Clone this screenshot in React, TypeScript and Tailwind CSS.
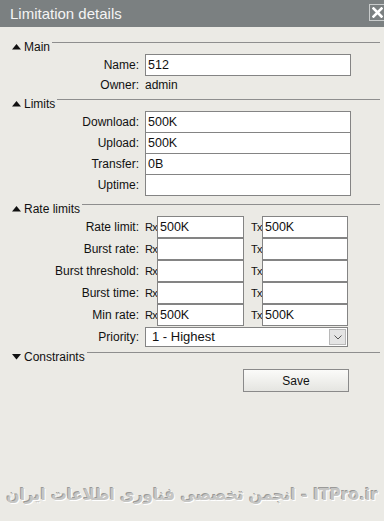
import React from "react";

function Tri({ down = false }: { down?: boolean }) {
  return (
    <svg width="9" height="6" viewBox="0 0 9 6" className="shrink-0">
      {down ? <polygon points="0,0 9,0 4.5,5.5" fill="#111" /> : <polygon points="0,5.5 9,5.5 4.5,0" fill="#111" />}
    </svg>
  );
}

function Header({ title, down = false, cls = "" }: { title: string; down?: boolean; cls?: string }) {
  return (
    <div className={"flex h-[15px] items-start pl-[12px] pr-[4px] " + cls}>
      <div className="flex items-center h-[14px] mt-[1px]">
        <Tri down={down} />
        <span className="ml-[3px] text-[12px] leading-[14px] text-[#111]">{title}</span>
      </div>
      <div className="flex-1 ml-[2px] mt-[3px] border-t border-[#8e8e8e]" />
    </div>
  );
}

function Label({ children }: { children: React.ReactNode }) {
  return <div className="w-[140px] shrink-0 text-right text-[12px] leading-[14px] text-[#111] pr-[1px]">{children}</div>;
}

function Input({ value = "", w, cls = "" }: { value?: string; w: string; cls?: string }) {
  return (
    <div className={"h-[22px] shrink-0 bg-white border border-[#848484] pl-[2px] flex items-center text-[12.5px] text-[#111] " + w + " " + cls}>
      {value}
    </div>
  );
}

function Row({ label, value, cls = "" }: { label: string; value?: string; cls?: string }) {
  return (
    <div className={"flex items-center " + cls}>
      <Label>{label}</Label>
      <Input value={value} w="w-[206px] ml-[5px]" />
    </div>
  );
}

function RateRow({ label, rx = "", tx = "" }: { label: string; rx?: string; tx?: string }) {
  return (
    <div className="flex items-center h-[22px]">
      <Label>{label}</Label>
      <span className="ml-[5px] w-[12px] whitespace-nowrap text-[11px] tracking-[-0.6px] text-[#111]">Rx</span>
      <Input value={rx} w="w-[87px]" />
      <span className="ml-[7px] w-[11px] whitespace-nowrap text-[11px] tracking-[-0.6px] text-[#111]">Tx</span>
      <Input value={tx} w="w-[86px]" />
    </div>
  );
}

export default function App() {
  return (
    <div className="w-[384px] h-[521px] bg-[#ebeae5] flex flex-col overflow-hidden font-['Liberation_Sans',Arial,sans-serif]">
      <div className="h-[27px] shrink-0 bg-[#7b8081] flex items-center justify-between pl-[10px]">
        <span className="text-[15px] text-[#f4f4f4] leading-none">Limitation details</span>
        <div className="w-[17px] h-[17px] mb-[3px] border border-[#c9cccc] flex items-center justify-center -mr-[2px]">
          <svg width="11" height="11" viewBox="0 0 11 11">
            <path d="M1.5 1.5 L9.5 9.5 M9.5 1.5 L1.5 9.5" stroke="#ffffff" strokeWidth="2.6" strokeLinecap="square" />
          </svg>
        </div>
      </div>

      <Header title="Main" cls="mt-[12px]" />
      <Row label="Name:" value="512" />
      <div className="flex items-center h-[20px] pb-[2px]">
        <Label>Owner:</Label>
        <span className="ml-[5px] text-[12px] text-[#111]">admin</span>
      </div>

      <Header title="Limits" />
      <Row label="Download:" value="500K" />
      <Row label="Upload:" value="500K" cls="-mt-px" />
      <Row label="Transfer:" value="0B" cls="-mt-px" />
      <Row label="Uptime:" cls="-mt-px" />

      <Header title="Rate limits" cls="mt-[5px]" />
      <RateRow label="Rate limit:" rx="500K" tx="500K" />
      <RateRow label="Burst rate:" />
      <RateRow label="Burst threshold:" />
      <RateRow label="Burst time:" />
      <RateRow label="Min rate:" rx="500K" tx="500K" />

      <div className="flex items-center mt-[1px]">
        <Label>Priority:</Label>
        <div className="ml-[5px] w-[203px] h-[20px] bg-white border border-[#848484] flex items-center justify-between pl-[6px] pr-[1px]">
          <span className="text-[13px] text-[#111]">1 - Highest</span>
          <div className="w-[17px] h-[16px] bg-[#e4e4e4] border border-[#b8b8b8] flex items-center justify-center">
            <svg width="8" height="5" viewBox="0 0 8 5">
              <path d="M0.5 0.5 L4 4 L7.5 0.5" stroke="#555" strokeWidth="1" fill="none" />
            </svg>
          </div>
        </div>
      </div>

      <Header title="Constraints" down cls="mt-[2px]" />

      <div className="flex mt-[5px]">
        <div className="ml-[243px] w-[106px] h-[23px] border border-[#8a8a8a] bg-gradient-to-b from-[#fbfbf9] to-[#e5e5e1] flex items-center justify-center text-[12px] text-[#111]">
          Save
        </div>
      </div>

      <div className="flex-1" />
      <div
        dir="rtl"
        className="pr-[6px] pb-[14px] text-right text-[15.5px] font-bold text-[#c6c6c4] whitespace-nowrap font-['DejaVu_Sans',sans-serif] [text-shadow:1px_1px_0_#ffffff,-1px_-1px_0_#9a9a98]"
      >
        ITPro.ir - انجمن تخصصی فناوری اطلاعات ایران
      </div>
    </div>
  );
}
